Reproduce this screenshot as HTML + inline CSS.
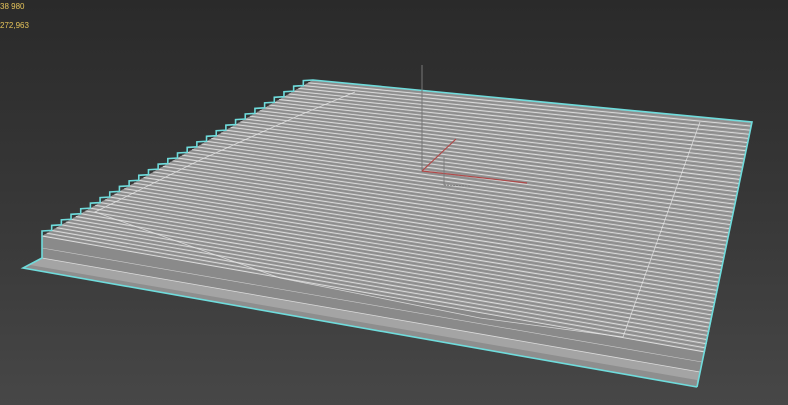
<!DOCTYPE html>
<html><head><style>
html,body{margin:0;padding:0;width:788px;height:405px;overflow:hidden;background:linear-gradient(#2a2a2a,#3a3a3a 60%,#474747);}
.t{position:absolute;left:0;font:8px "Liberation Sans",sans-serif;color:#e6c45a;}
</style></head><body>
<div class="t" style="top:2px">38 980</div>
<div class="t" style="top:21px">272,963</div>
<svg id="s" width="788" height="405" style="position:absolute;left:0;top:0">
<polygon points="23,268 42,258 700,372 697,387" fill="#a4a4a4"/>
<polygon points="23,268 697,387 697,380 30,265" fill="#8e8e8e"/>
<polygon points="42,236 42,258 700,372 705,352" fill="#8a8a8a"/>
<polygon points="42,236 313,80 752,122 705,352" fill="#9a9a9a"/>
<g id="g"></g>
<polyline points="355,92 300,115 200,160 95,212 280,278 480,318 623,337 700,122" fill="none" stroke="#e8e8e8" stroke-width="0.8" opacity="0.8"/>
<line x1="42" y1="258" x2="700" y2="372" stroke="#ddd" stroke-width="0.8"/>
<line x1="42" y1="248" x2="702" y2="362" stroke="#ccc" stroke-width="0.6"/>
<polyline id="o" fill="none" stroke="#6fdcdc" stroke-width="1.6" stroke-linejoin="miter"/>
<line x1="422" y1="65" x2="422" y2="172" stroke="#777" stroke-width="1"/>
<line x1="422" y1="171" x2="456" y2="139" stroke="#b04848" stroke-width="1.2"/>
<line x1="422" y1="171" x2="527" y2="183" stroke="#b04848" stroke-width="1.2"/>
<line x1="444" y1="157" x2="444" y2="185" stroke="#777" stroke-width="0.8"/>
<line x1="444" y1="185" x2="470" y2="186" stroke="#777" stroke-width="0.8" stroke-dasharray="2,1"/>
</svg>
<script>
var g=document.getElementById('g'),h='';
var T=28,N=56;
function L(t){return [42+(313-42)*t,236+(80-236)*t];}
function R(t){return [705+(752-705)*t,352+(122-352)*t];}
for(var i=0;i<N;i++){var t=i/N,a=L(t),b=R(t),t2=(i+0.5)/N,c=L(t2),d=R(t2);
h+='<line x1="'+a[0]+'" y1="'+a[1]+'" x2="'+b[0]+'" y2="'+b[1]+'" stroke="#dedede" stroke-width="0.9"/>';
h+='<line x1="'+c[0]+'" y1="'+c[1]+'" x2="'+d[0]+'" y2="'+d[1]+'" stroke="#8a8a8a" stroke-width="1"/>';}
g.innerHTML=h;
var p=[[697,387],[23,268],[42,258],[42,236]];
for(var i=0;i<T;i++){var a=L(i/T),b=L((i+1)/T);p.push([a[0],a[1]-5]);p.push(b);}
p.push([313,80],[752,122],[697,387]);
document.getElementById('o').setAttribute('points',p.map(function(q){return q.join(',')}).join(' '));
</script>
</body></html>
